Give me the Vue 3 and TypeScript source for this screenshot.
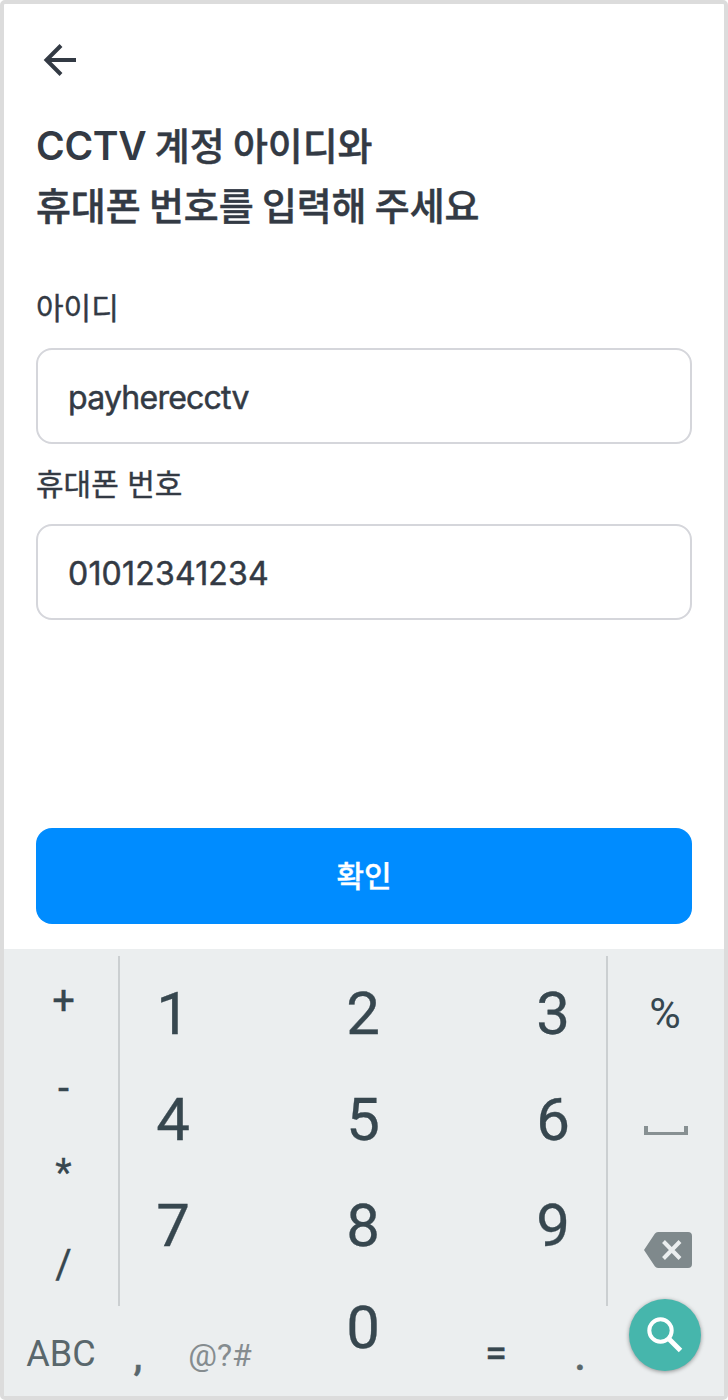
<script setup lang="ts">
import { ref } from 'vue'

const accountId = ref('payherecctv')
const phone = ref('01012341234')
const operators: string[] = ['+', '-', '*', '/']
const digitRows: string[][] = [
  ['1', '2', '3'],
  ['4', '5', '6'],
  ['7', '8', '9'],
]
</script>

<template>
  <div class="screen">
    <main class="content">
      <button class="back" aria-label="뒤로">
        <svg width="34" height="32" viewBox="0 0 34 32" fill="none" stroke="#333a44" stroke-width="4">
          <path d="M33 16H4M18 1.5L3.5 16L18 30.5" />
        </svg>
      </button>
      <h1 class="title"><span class="latin">CCTV</span> 계정 아이디와<br />휴대폰 번호를 입력해 주세요</h1>

      <label class="label" for="account">아이디</label>
      <input id="account" v-model="accountId" class="field account" type="text" />
      <label class="label" for="phone">휴대폰 번호</label>
      <input id="phone" v-model="phone" class="field" type="text" />

      <button class="confirm">확인</button>
    </main>

    <section class="keyboard">
      <div class="upper">
        <div class="operators">
          <span v-for="op in operators" :key="op" class="op" :class="{ star: op === '*' }">{{ op }}</span>
        </div>
        <div class="digits">
          <div v-for="row in digitRows" :key="row[0]" class="digit-row">
            <span v-for="d in row" :key="d" class="digit">{{ d }}</span>
          </div>
        </div>
        <div class="side">
          <span class="percent">%</span>
          <svg class="space" width="44" height="9" viewBox="0 0 44 9" fill="none" stroke="#879092">
            <path d="M0 7.5H44" stroke-width="3" />
            <path d="M2 0V9M42 0V9" stroke-width="4" />
          </svg>
          <svg class="erase" width="48" height="36" viewBox="0 0 48 36">
            <path d="M14 0H44Q48 0 48 4V32Q48 36 44 36H14Q12 36 10.8 34.2L0 18L10.8 1.8Q12 0 14 0Z" fill="#7f898c" />
            <path d="M19.5 9.5L36 26.5M36 9.5L19.5 26.5" fill="none" stroke="#ebeeef" stroke-width="4" />
          </svg>
        </div>
      </div>
      <div class="lower">
        <span class="abc">ABC</span>
        <span class="comma">,</span>
        <span class="symbols">@?#</span>
        <span class="digit zero">0</span>
        <span class="equals">=</span>
        <span class="period">.</span>
        <button class="search" aria-label="검색">
          <svg width="36" height="36" viewBox="0 0 36 36" fill="none" stroke="#fff">
            <circle cx="13.5" cy="13.5" r="11.2" stroke-width="4" />
            <path d="M22 22L33.5 33.5" stroke-width="5" />
          </svg>
        </button>
      </div>
    </section>
  </div>
</template>

<style>
body {
  margin: 0;
  background: #fff;
}
</style>

<style scoped>
.screen {
  box-sizing: border-box;
  width: 728px;
  height: 1400px;
  border: 4px solid #dcdcdc;
  border-radius: 5px;
  display: flex;
  flex-direction: column;
  background: #fff;
  color: #333a44;
  font-family: Inter, "Noto Sans CJK KR", sans-serif;
}
.content {
  box-sizing: border-box;
  height: 945px;
  padding: 40px 32px 0;
  display: flex;
  flex-direction: column;
}
button {
  border: 0;
  padding: 0;
  background: none;
}
.back {
  align-self: flex-start;
  height: 32px;
  margin-left: 7px;
  line-height: 0;
}
.title {
  margin: 38px 0 0;
  font-family: "Noto Sans CJK KR", sans-serif;
  font-size: 38px;
  line-height: 60px;
  font-weight: 500;
  letter-spacing: -0.12px;
  -webkit-text-stroke: 0.5px #333a44;
}
.latin {
  font-family: Inter, sans-serif;
  font-size: 39px;
  line-height: 1;
  font-weight: 600;
  letter-spacing: -0.3px;
  -webkit-text-stroke: 0;
}
.label {
  height: 48px;
  margin-top: 16px;
  font-size: 30px;
  line-height: 49px;
  font-weight: 400;
  -webkit-text-stroke: 0.4px #333a44;
}
.title + .label {
  margin-top: 50px;
}
.field {
  box-sizing: border-box;
  width: 656px;
  height: 96px;
  margin-top: 16px;
  padding: 2px 30px 0;
  border: 2px solid #d5d6db;
  border-radius: 16px;
  outline: none;
  background: #fff;
  color: #333a44;
  font: 400 32px Inter, sans-serif;
  letter-spacing: 0.2px;
  -webkit-text-stroke: 0.5px #333a44;
}
.account {
  letter-spacing: -0.75px;
}
.confirm {
  height: 96px;
  margin-top: 208px;
  padding-bottom: 4px;
  border-radius: 16px;
  background: #008cff;
  color: #fff;
  font: 500 30px "Noto Sans CJK KR", sans-serif;
  -webkit-text-stroke: 0.3px #fff;
}
.keyboard {
  box-sizing: border-box;
  height: 447px;
  padding-top: 7px;
  background: #ebeeef;
  color: #37474f;
  font-family: Roboto, sans-serif;
}
.upper {
  display: flex;
  height: 350px;
}
.operators {
  width: 114px;
  border-right: 2px solid #cbcfd1;
}
.op {
  display: block;
  height: 88px;
  padding-left: 5px;
  font-size: 40px;
  line-height: 90px;
  text-align: center;
  -webkit-text-stroke: 0.3px #37474f;
}
.star {
  font-size: 38px;
  line-height: 83px;
}
.digits {
  width: 486px;
  padding-top: 4px;
  box-sizing: border-box;
}
.digit-row {
  display: flex;
  justify-content: space-between;
  padding: 0 33px;
  height: 106px;
}
.digit {
  width: 40px;
  font-size: 60px;
  line-height: 107px;
  text-align: center;
  -webkit-text-stroke: 0.3px #37474f;
}
.side {
  flex: 1;
  display: flex;
  flex-direction: column;
  border-left: 2px solid #cbcfd1;
}
.percent {
  height: 106px;
  padding: 4px 2px 0 0;
  font-size: 43px;
  line-height: 106px;
  text-align: center;
}
.space {
  margin: 60px 0 0 36px;
}
.erase {
  margin: 97px 0 0 36px;
}
.lower {
  display: grid;
  grid-template-columns: 114px 39px 126px 160px 106px 62px 107px;
  height: 90px;
  text-align: center;
  line-height: 96px;
  color: #59676c;
}
.abc {
  font-size: 36px;
}
.comma,
.period,
.equals {
  font-size: 40px;
  -webkit-text-stroke: 0.4px currentColor;
}
.comma,
.period {
  font-weight: 500;
  line-height: 102px;
}
.comma {
  padding-left: 1px;
}
.equals {
  color: #37474f;
}
.symbols {
  font-size: 32px;
  line-height: 98px;
  color: #858c8f;
}
.zero {
  width: auto;
  line-height: 43px;
  color: #37474f;
}
.search {
  display: flex;
  align-items: center;
  justify-content: center;
  justify-self: center;
  width: 72px;
  height: 72px;
  margin: -7.5px 0 0;
  border-radius: 50%;
  background: #46b6ac;
  box-shadow: 0 1px 4px rgba(0, 0, 0, 0.4);
}
</style>
